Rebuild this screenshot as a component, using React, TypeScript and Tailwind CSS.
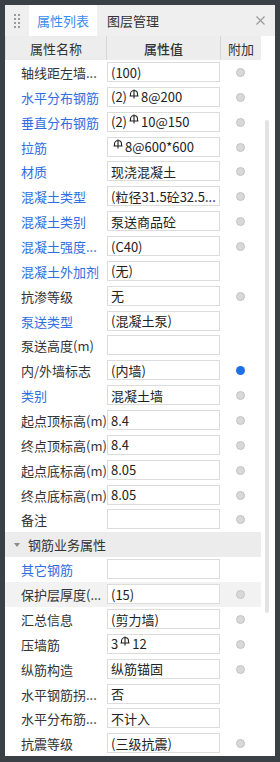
import React from "react";

type Row = {
  label: string;
  value: string;
  blue?: boolean;
  dot?: "off" | "on";
  hover?: boolean;
};

const rowsA: Row[] = [
  { label: "轴线距左墙...", value: "(100)", dot: "off" },
  { label: "水平分布钢筋", value: "(2)|8@200", blue: true, dot: "off" },
  { label: "垂直分布钢筋", value: "(2)|10@150", blue: true, dot: "off" },
  { label: "拉筋", value: "|8@600*600", blue: true, dot: "off" },
  { label: "材质", value: "现浇混凝土", blue: true, dot: "off" },
  { label: "混凝土类型", value: "(粒径31.5砼32.5...", blue: true, dot: "off" },
  { label: "混凝土类别", value: "泵送商品砼", blue: true, dot: "off" },
  { label: "混凝土强度...", value: "(C40)", blue: true, dot: "off" },
  { label: "混凝土外加剂", value: "(无)", blue: true },
  { label: "抗渗等级", value: "无", dot: "off" },
  { label: "泵送类型", value: "(混凝土泵)", blue: true },
  { label: "泵送高度(m)", value: "" },
  { label: "内/外墙标志", value: "(内墙)", dot: "on" },
  { label: "类别", value: "混凝土墙", blue: true, dot: "off" },
  { label: "起点顶标高(m)", value: "8.4", dot: "off" },
  { label: "终点顶标高(m)", value: "8.4", dot: "off" },
  { label: "起点底标高(m)", value: "8.05", dot: "off" },
  { label: "终点底标高(m)", value: "8.05", dot: "off" },
  { label: "备注", value: "", dot: "off" },
];

const rowsB: Row[] = [
  { label: "其它钢筋", value: "", blue: true },
  { label: "保护层厚度(...", value: "(15)", dot: "off", hover: true },
  { label: "汇总信息", value: "(剪力墙)", dot: "off" },
  { label: "压墙筋", value: "3|12", dot: "off" },
  { label: "纵筋构造", value: "纵筋锚固", dot: "off" },
  { label: "水平钢筋拐...", value: "否" },
  { label: "水平分布筋...", value: "不计入" },
  { label: "抗震等级", value: "(三级抗震)", dot: "off" },
];

// steel grade mark (superscript-ish)
function BarMark() {
  return (
    <svg width="10" height="10" viewBox="0 0 10 10" className="inline-block align-top mt-[-1px] mx-[2px]">
      <path d="M1.5 6.5V5A3.5 3.5 0 0 1 8.5 5V6.5M0.5 7H9.5M5 0.5V9.5" fill="none" stroke="#222" strokeWidth="1.1" />
    </svg>
  );
}

function Value({ text }: { text: string }) {
  const parts = text.split("|");
  return (
    <span className="whitespace-nowrap">
      {parts.map((p, i) => (
        <React.Fragment key={i}>
          {i > 0 && <BarMark />}
          {p}
        </React.Fragment>
      ))}
    </span>
  );
}

function PropRow({ row }: { row: Row }) {
  return (
    <div className={`grid grid-cols-[101px_114px_41px] h-[25px] ${row.hover ? "bg-[#f2f2f2]" : "bg-white"}`}>
      <div className={`flex items-center pl-[16px] ${row.blue ? "text-[#2f6ee0]" : "text-[#333]"} whitespace-nowrap overflow-hidden`}>
        {row.label}
      </div>
      <div className="pt-[2px] pl-[1px]">
        <div className="h-[20px] w-[113px] border border-[#dcdcdc] bg-white pl-[3px] flex items-center text-[#222] overflow-hidden">
          <Value text={row.value} />
        </div>
      </div>
      <div className="flex items-center justify-center">
        {row.dot === "off" && <div className="w-[9px] h-[9px] rounded-full bg-[#d8d8d8] border border-[#c4c4c4]" />}
        {row.dot === "on" && <div className="w-[9px] h-[9px] rounded-full bg-[#1f6fe5]" />}
      </div>
    </div>
  );
}

export default function App() {
  return (
    <div className="w-[280px] h-[762px] bg-[#3b4047] pt-[5px] px-[5px] pb-[6px] text-[13px] leading-none" style={{ fontFamily: '"Noto Sans CJK SC", "Noto Sans", sans-serif' }}>
      <div className="h-full bg-white flex flex-col overflow-hidden">
        {/* tabs */}
        <div className="h-[31px] bg-[#efefef] flex items-stretch shrink-0">
          <div className="w-[24px] flex items-center justify-center">
            <div className="grid grid-cols-2 gap-[2px]">
              {[0, 1, 2, 3, 4, 5, 6, 7].map((i) => (
                <div key={i} className="w-[2px] h-[2px] bg-[#9a9a9a]" />
              ))}
            </div>
          </div>
          <div className="w-[68px] bg-white flex items-center justify-center text-[#3a8bf0]">属性列表</div>
          <div className="flex items-center pl-[10px] text-[#333]">图层管理</div>
          <div className="ml-auto w-[30px] flex items-center justify-center">
            <svg width="9" height="9" viewBox="0 0 9 9">
              <path d="M0.5 0.5L8.5 8.5M8.5 0.5L0.5 8.5" stroke="#9a9a9a" strokeWidth="1.2" />
            </svg>
          </div>
        </div>

        <div className="flex flex-1 overflow-hidden">
          <div className="w-[256px] flex flex-col">
            {/* header */}
            <div className="grid grid-cols-[101px_114px_41px] h-[24px] bg-[#ededed] text-[#333] border-l border-[#dedede] shrink-0">
              <div className="flex items-center justify-center border-r border-[#d6d6d6]">属性名称</div>
              <div className="flex items-center justify-center border-r border-[#d6d6d6] font-medium">属性值</div>
              <div className="flex items-center justify-center border-r border-[#d6d6d6]">附加</div>
            </div>
            {rowsA.map((r) => (
              <PropRow key={r.label} row={r} />
            ))}
            <div className="h-[25px] bg-[#ececec] flex items-center text-[#333] shrink-0">
              <svg width="6" height="4" viewBox="0 0 6 4" className="ml-[9px] mr-[8px]">
                <path d="M0 0H6L3 4Z" fill="#8a8a8a" />
              </svg>
              钢筋业务属性
            </div>
            {rowsB.map((r) => (
              <PropRow key={r.label} row={r} />
            ))}
          </div>
          <div className="w-[14px] bg-white pt-[84px] pl-[4px]">
            <div className="w-[4px] h-[493px] rounded-full bg-[#e3e3e3]" />
          </div>
        </div>
      </div>
    </div>
  );
}
